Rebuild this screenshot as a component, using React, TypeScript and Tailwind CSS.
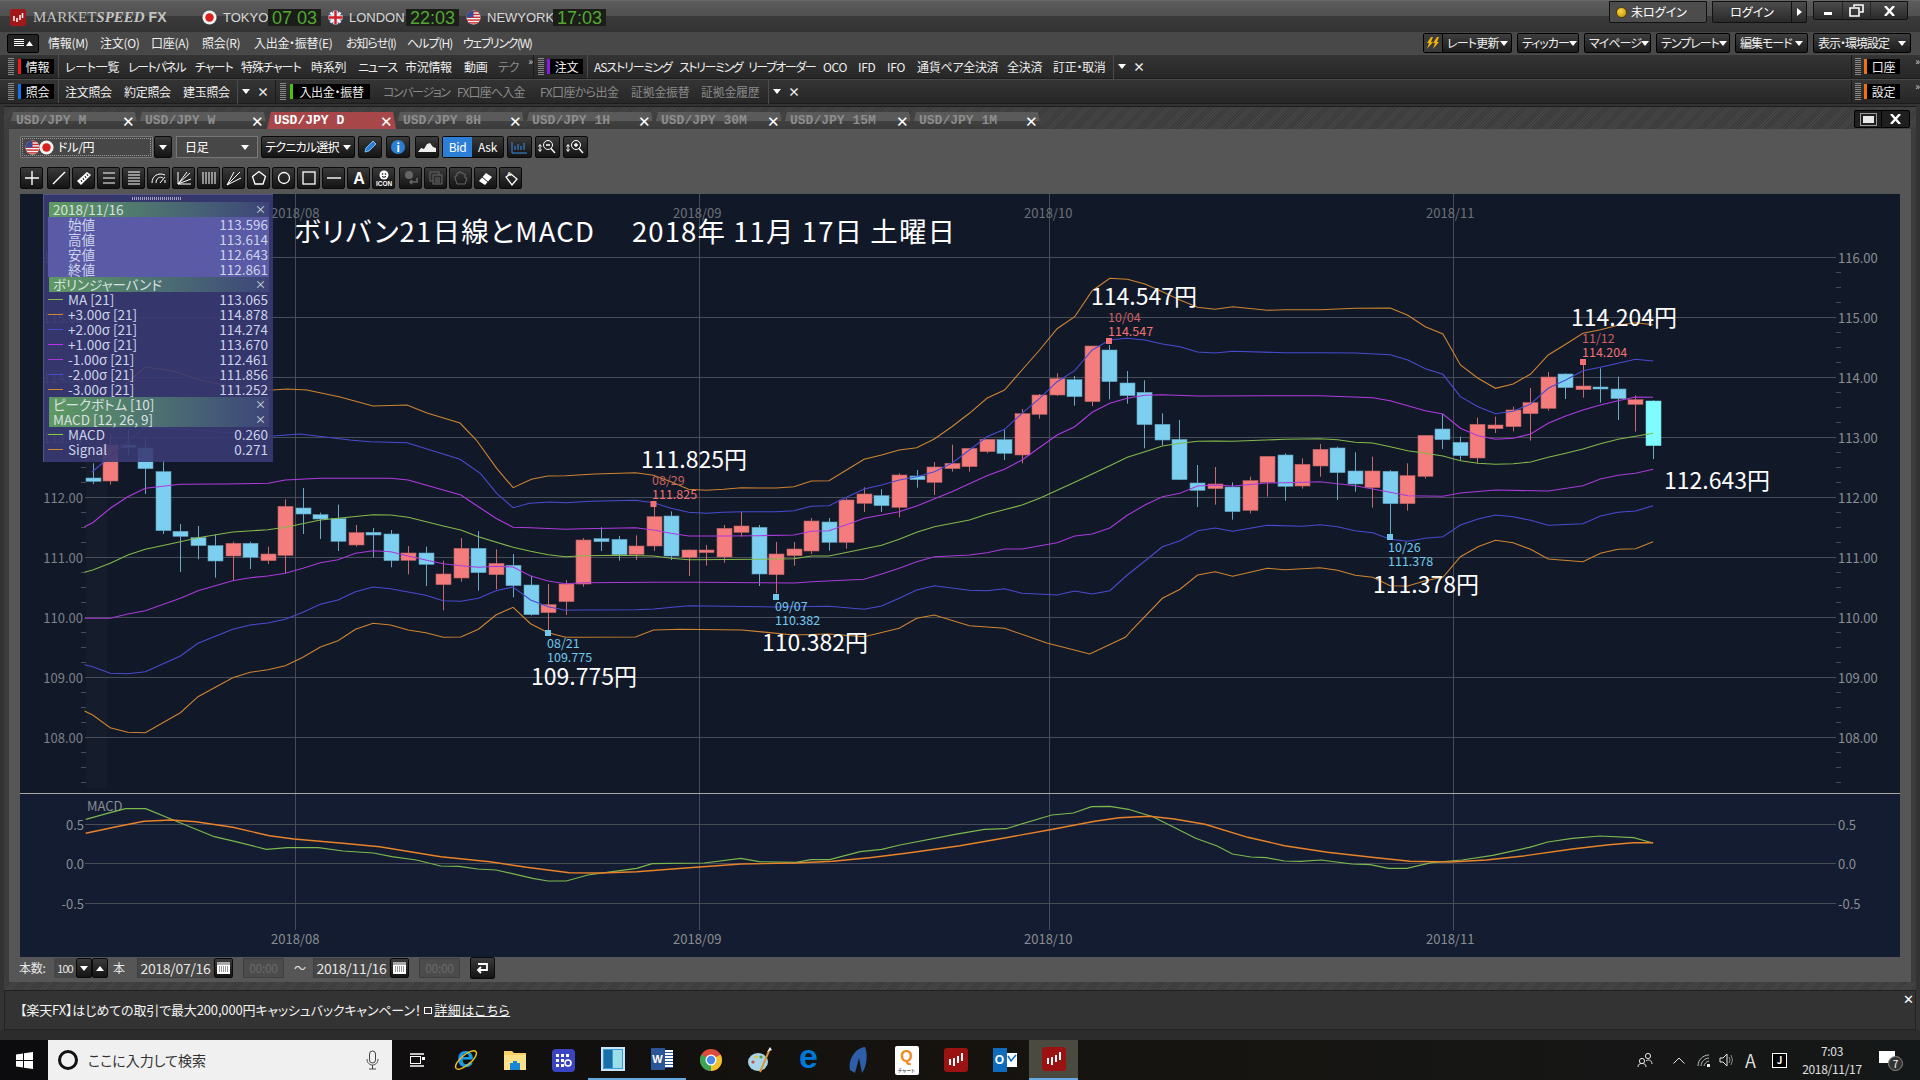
import type { ReactNode } from 'react';

// ---------- chart data (read off the reference, in zoomed crop coordinates) ----------
type Pt = [number, number];
const z8 = (x: number, y: number): Pt => [60 + x / 2.45, 440 + y / 3];
const z9 = (x: number, y: number): Pt => [640 + x / 2.45, 250 + y / 3];
const z10 = (x: number, y: number): Pt => [1240 + x / 2.45, 250 + y / 3];
const z11 = (x: number, y: number): Pt => [x / 1.6333, 780 + y / 3];
const z12 = (x: number, y: number): Pt => [960 + x / 1.6333, 780 + y / 3];

const pairs = (vals: number[], fn: (x: number, y: number) => Pt) => {
  const out: Pt[] = [];
  for (let i = 0; i < vals.length; i += 2) out.push(fn(vals[i], vals[i + 1]));
  return out;
};

const band = (head: number[], a: number[], b: number[], c: number[]) => {
  const pts = [
    ...pairs(head, (x, y) => [x, y]),
    ...pairs(a, z8).filter((p) => p[0] <= 650),
    ...pairs(b, z9).filter((p) => p[0] > 650 && p[0] <= 1250),
    ...pairs(c, z10).filter((p) => p[0] > 1250),
  ];
  return pts.map((p) => `${p[0].toFixed(1)},${p[1].toFixed(1)}`).join(' ');
};

const toLine = (pts: Pt[]) => pts.map((p) => `${p[0].toFixed(1)},${p[1].toFixed(1)}`).join(' ');

const BANDS = [
  {
    color: '#d08430',
    points: band(
      [92, 418, 110, 400, 127, 383, 145, 367, 173, 371, 200, 380, 233, 387, 273, 390, 287, 389, 307, 390, 340, 397, 373, 406, 407, 405, 427, 413, 460, 423],
      [1020, 0, 1070, 85, 1110, 143, 1155, 118, 1195, 108, 1240, 107, 1310, 102, 1410, 98, 1450, 105],
      [33, 676, 76, 695, 119, 718, 162, 721, 205, 718, 248, 713, 291, 714, 334, 714, 377, 710, 420, 693, 463, 692, 506, 660, 549, 628, 592, 615, 635, 600, 678, 593, 721, 567, 764, 530, 807, 490, 850, 445, 893, 420, 936, 360, 979, 300, 1022, 236, 1065, 200, 1108, 122, 1151, 85, 1194, 88, 1237, 102, 1280, 125, 1323, 150, 1366, 172, 1409, 178, 1452, 170, 1495, 178, 1538, 181],
      [24, 179, 67, 181, 110, 179, 196, 179, 282, 175, 368, 174, 411, 196, 454, 230, 497, 252, 540, 345, 583, 385, 626, 415, 669, 402, 712, 372, 755, 315, 798, 283, 840, 250, 883, 239, 926, 226, 969, 218, 1012, 224],
    ),
  },
  {
    color: '#4a4ad0',
    points: band(
      [92, 472, 145, 427, 180, 429, 273, 436, 300, 434],
      [710, 0, 760, 5, 850, 8, 980, 58, 1030, 100, 1070, 160, 1110, 203, 1150, 190, 1200, 186, 1240, 188, 1300, 184, 1410, 181, 1450, 187],
      [33, 758, 76, 775, 119, 787, 162, 790, 205, 787, 248, 785, 291, 785, 334, 785, 377, 782, 420, 769, 463, 767, 506, 742, 549, 717, 592, 705, 635, 690, 678, 680, 721, 665, 764, 640, 807, 600, 850, 560, 893, 538, 936, 490, 979, 445, 1022, 395, 1065, 362, 1108, 300, 1151, 270, 1194, 265, 1237, 270, 1280, 282, 1323, 290, 1366, 306, 1409, 309, 1452, 304, 1495, 309, 1538, 310],
      [24, 310, 110, 308, 196, 308, 282, 309, 368, 314, 411, 330, 454, 356, 497, 373, 540, 440, 583, 470, 626, 491, 669, 484, 712, 462, 755, 415, 798, 390, 840, 362, 883, 352, 926, 340, 969, 328, 1012, 333],
    ),
  },
  {
    color: '#b03ae0',
    points: band(
      [],
      [60, 260, 80, 248, 123, 205, 166, 170, 209, 145, 295, 133, 400, 132, 510, 130, 552, 120, 638, 115, 810, 115, 853, 120, 896, 135, 982, 165, 1025, 200, 1068, 235, 1110, 262, 1153, 263, 1239, 268, 1282, 266, 1410, 263, 1454, 268],
      [33, 840, 76, 850, 119, 858, 205, 858, 291, 857, 377, 855, 420, 844, 463, 842, 506, 824, 549, 805, 635, 785, 678, 768, 764, 725, 850, 677, 893, 658, 936, 630, 1022, 555, 1065, 530, 1108, 487, 1151, 460, 1194, 445, 1237, 436, 1280, 434, 1366, 438, 1538, 438],
      [24, 438, 196, 437, 325, 443, 368, 452, 411, 467, 454, 482, 497, 492, 540, 535, 583, 557, 626, 568, 669, 565, 712, 552, 755, 520, 798, 498, 840, 480, 883, 465, 926, 452, 969, 441, 1012, 442],
    ),
  },
  {
    color: '#86b84a',
    points: band(
      [],
      [60, 397, 80, 390, 123, 370, 166, 345, 209, 328, 295, 305, 338, 293, 423, 276, 509, 269, 552, 262, 638, 240, 767, 224, 810, 225, 853, 232, 939, 258, 982, 270, 1025, 290, 1110, 322, 1153, 334, 1196, 344, 1239, 350, 1282, 347, 1368, 346, 1454, 347],
      [33, 918, 76, 925, 119, 929, 291, 928, 377, 926, 420, 918, 463, 918, 592, 886, 635, 868, 678, 847, 721, 830, 807, 810, 850, 793, 936, 765, 979, 745, 1065, 697, 1108, 672, 1151, 647, 1194, 622, 1237, 605, 1280, 588, 1323, 580, 1366, 574, 1409, 573, 1452, 574, 1495, 570, 1568, 568],
      [0, 573, 110, 568, 196, 566, 239, 569, 282, 577, 325, 579, 368, 590, 411, 602, 454, 610, 497, 618, 540, 632, 583, 640, 626, 643, 669, 641, 712, 636, 755, 622, 798, 610, 840, 597, 883, 581, 926, 568, 969, 559, 1012, 550],
    ),
  },
  {
    color: '#a83ad8',
    points: band(
      [],
      [60, 535, 123, 535, 166, 522, 209, 512, 295, 475, 338, 452, 423, 422, 466, 413, 509, 408, 552, 400, 595, 385, 638, 368, 681, 359, 724, 340, 767, 332, 810, 335, 853, 348, 896, 360, 939, 371, 982, 377, 1025, 382, 1068, 379, 1110, 381, 1153, 408, 1196, 423, 1239, 431, 1282, 428, 1450, 428],
      [33, 997, 147, 997, 377, 999, 420, 995, 549, 988, 592, 972, 635, 955, 678, 935, 721, 920, 807, 915, 850, 908, 893, 897, 936, 897, 1022, 878, 1065, 858, 1108, 852, 1151, 834, 1194, 796, 1237, 765, 1280, 740, 1323, 730, 1366, 708, 1409, 705, 1452, 708, 1495, 700, 1538, 697],
      [24, 703, 67, 699, 110, 698, 196, 695, 282, 707, 368, 727, 411, 737, 497, 739, 540, 729, 626, 720, 755, 723, 840, 707, 883, 687, 926, 676, 969, 670, 1012, 658],
    ),
  },
  {
    color: '#4a4ad0',
    points: band(
      [],
      [60, 674, 80, 680, 123, 700, 166, 701, 209, 695, 295, 648, 338, 610, 423, 568, 466, 555, 509, 549, 552, 538, 595, 517, 638, 493, 681, 480, 724, 455, 767, 441, 810, 446, 896, 466, 939, 482, 982, 484, 1025, 475, 1068, 452, 1110, 441, 1153, 480, 1196, 500, 1239, 511, 1282, 510, 1411, 509, 1450, 505],
      [33, 1077, 119, 1067, 334, 1071, 463, 1069, 549, 1078, 592, 1068, 635, 1045, 678, 1020, 721, 1007, 807, 1021, 850, 1022, 893, 1016, 936, 1030, 1022, 1035, 1065, 1023, 1108, 1032, 1151, 1022, 1194, 975, 1237, 933, 1280, 890, 1323, 872, 1366, 842, 1409, 834, 1452, 844, 1495, 832, 1538, 827],
      [24, 839, 67, 826, 153, 829, 196, 824, 239, 830, 282, 842, 325, 848, 368, 868, 411, 874, 454, 865, 497, 860, 540, 825, 583, 807, 626, 795, 669, 800, 712, 811, 755, 826, 840, 821, 883, 798, 926, 787, 969, 783, 1012, 767],
    ),
  },
  {
    color: '#d08430',
    points: band(
      [],
      [60, 813, 80, 825, 123, 863, 166, 877, 209, 878, 295, 818, 338, 770, 423, 713, 466, 697, 509, 689, 552, 677, 595, 652, 638, 621, 681, 602, 724, 568, 767, 550, 810, 555, 853, 570, 896, 578, 939, 592, 982, 591, 1025, 568, 1068, 525, 1110, 502, 1153, 551, 1196, 578, 1239, 592, 1410, 591, 1450, 585],
      [33, 1140, 100, 1138, 250, 1140, 377, 1155, 463, 1152, 549, 1160, 635, 1135, 678, 1105, 721, 1095, 807, 1127, 893, 1135, 997, 1179, 1102, 1212, 1190, 1161, 1205, 1140, 1280, 1045, 1323, 1018, 1366, 975, 1409, 965, 1452, 979, 1495, 962, 1538, 955],
      [0, 971, 24, 962, 67, 955, 110, 959, 196, 953, 239, 961, 282, 976, 325, 982, 368, 1007, 411, 1008, 454, 992, 497, 982, 540, 920, 583, 890, 626, 871, 669, 878, 712, 898, 755, 927, 840, 935, 883, 910, 926, 898, 969, 896, 1012, 875],
    ),
  },
];

const MACD_LINE = toLine([
  ...pairs([140, 118, 180, 98, 205, 86, 238, 86, 290, 125, 350, 170, 385, 185, 435, 208, 470, 203, 520, 203, 560, 213, 610, 219, 640, 230, 680, 240, 720, 258, 750, 259, 780, 267, 810, 270, 870, 295, 895, 303, 925, 303, 960, 285, 1000, 275, 1040, 265, 1065, 251, 1150, 249, 1210, 235, 1240, 245, 1300, 247, 1325, 239, 1355, 239, 1405, 215, 1440, 208, 1470, 195, 1560, 163], z11),
  ...pairs([40, 148, 75, 146, 150, 105, 185, 99, 215, 80, 245, 79, 275, 88, 315, 110, 385, 175, 420, 198, 445, 222, 475, 231, 500, 233, 530, 243, 555, 244, 590, 240, 640, 252, 670, 254, 700, 265, 730, 265, 770, 248, 820, 240, 870, 226, 930, 202, 960, 186, 1000, 175, 1045, 168, 1100, 173, 1132, 189], z12),
]);
const SIGNAL_LINE = toLine([
  ...pairs([140, 160, 190, 140, 235, 124, 280, 120, 320, 125, 380, 142, 440, 167, 480, 177, 560, 190, 620, 200, 720, 230, 800, 245, 860, 262, 930, 278, 980, 279, 1040, 275, 1120, 264, 1210, 252, 1300, 249, 1360, 244, 1420, 233, 1480, 220, 1568, 197], z11),
  ...pairs([75, 173, 145, 150, 220, 124, 260, 113, 310, 109, 350, 117, 400, 133, 470, 172, 530, 197, 600, 217, 680, 233, 735, 244, 800, 246, 860, 240, 920, 228, 1000, 207, 1060, 194, 1100, 188, 1132, 188], z12),
]);

// kind, body top, body bottom, wick top, wick bottom
type Row = [string, number, number, number, number];
const C8: Row[] = [
  ['b', 114, 124, 70, 132], ['r', 15, 123, -20, 134], ['b', 15, 22, -30, 45], ['b', 24, 86, -9, 162], ['b', 95, 272, 60, 282],
  ['b', 274, 289, 252, 396], ['b', 293, 317, 258, 358], ['b', 317, 363, 283, 413], ['r', 310, 348, 305, 422], ['b', 310, 352, 305, 387],
  ['r', 342, 362, 320, 372], ['r', 199, 346, 178, 400], ['b', 204, 222, 144, 282], ['b', 224, 237, 218, 297], ['b', 236, 304, 194, 333],
  ['r', 278, 315, 255, 320], ['b', 277, 285, 264, 352], ['b', 282, 362, 270, 382], ['r', 339, 361, 318, 403], ['b', 339, 373, 320, 438],
  ['r', 402, 434, 362, 511], ['r', 325, 414, 294, 425], ['b', 325, 398, 273, 452], ['r', 370, 404, 328, 448], ['b', 376, 437, 342, 472],
  ['b', 435, 524, 407, 527], ['r', 494, 518, 432, 575], ['r', 432, 485, 420, 525], ['r', 300, 432, 294, 440], ['b', 296, 305, 262, 333],
  ['b', 298, 344, 288, 362], ['r', 318, 343, 286, 360], ['r', 230, 318, 200, 333], ['b', 228, 348, 214, 360], ['r', 330, 352, 328, 408],
];
const C9: Row[] = [
  ['r', 900, 908, 885, 947], ['r', 835, 921, 825, 938], ['r', 828, 847, 786, 860], ['b', 832, 972, 825, 1008], ['r', 912, 974, 876, 1030],
  ['r', 897, 917, 876, 947], ['r', 813, 903, 804, 912], ['b', 816, 877, 804, 902], ['r', 750, 877, 745, 896], ['r', 732, 760, 712, 786],
  ['b', 737, 767, 718, 786], ['r', 675, 772, 670, 802], ['b', 678, 689, 660, 713], ['r', 651, 697, 636, 735], ['r', 640, 656, 584, 665],
  ['r', 595, 650, 595, 665], ['r', 568, 605, 567, 610], ['b', 569, 610, 540, 630], ['r', 491, 615, 477, 640], ['r', 435, 493, 432, 506],
  ['r', 386, 435, 370, 438], ['b', 389, 440, 378, 467], ['r', 288, 455, 288, 468], ['b', 300, 395, 285, 448], ['b', 399, 437, 363, 461],
  ['b', 427, 524, 391, 595], ['b', 523, 570, 490, 586], ['b', 568, 689, 510, 690], ['b', 699, 721, 645, 771], ['r', 702, 716, 651, 764],
  ['b', 711, 785, 697, 809],
];
const C10: Row[] = [
  ['r', 692, 781, 680, 790], ['r', 619, 697, 619, 740], ['b', 615, 709, 610, 752], ['r', 643, 708, 625, 716], ['r', 598, 648, 582, 680],
  ['b', 594, 668, 590, 750], ['b', 663, 702, 607, 725], ['r', 663, 713, 620, 773], ['b', 664, 761, 660, 855], ['r', 677, 761, 640, 782],
  ['r', 556, 679, 555, 686], ['b', 537, 569, 492, 597], ['b', 577, 617, 560, 632], ['r', 523, 624, 503, 640], ['r', 525, 536, 500, 549],
  ['r', 480, 530, 470, 544], ['r', 458, 491, 414, 572], ['r', 381, 475, 366, 482], ['b', 372, 413, 370, 447], ['r', 408, 419, 345, 443],
  ['b', 411, 415, 355, 458], ['b', 417, 446, 380, 510], ['r', 449, 463, 436, 545], ['c', 453, 587, 451, 627],
];
const CANDLES = [
  ...C8.map((r) => ({ k: r[0], bt: 440 + r[1] / 3, bb: 440 + r[2] / 3, wt: 440 + r[3] / 3, wb: 440 + r[4] / 3 })),
  ...[...C9, ...C10].map((r) => ({ k: r[0], bt: 250 + r[1] / 3, bb: 250 + r[2] / 3, wt: 250 + r[3] / 3, wb: 250 + r[4] / 3 })),
];
const CANDLE_COLOR: Record<string, { fill: string; edge: string; wick: string }> = {
  r: { fill: '#f47c7c', edge: '#b86060', wick: '#c46a6a' },
  b: { fill: '#7ccfef', edge: '#5f9fbc', wick: '#6aa8c4' },
  c: { fill: '#7ffcff', edge: '#70d8dc', wick: '#66b0c0' },
};

const PRICE_GRID = [116, 115, 114, 113, 112, 111, 110, 109, 108];
const MONTHS = [
  { label: '2018/08', x: 295.5, tx: 271 },
  { label: '2018/09', x: 699.5, tx: 673 },
  { label: '2018/10', x: 1049.5, tx: 1024 },
  { label: '2018/11', x: 1453.5, tx: 1426 },
];
const MARKERS = [
  { x: 548, y: 633, c: 'b', d: '08/21', p: '109.775', tx: 547, ty: 648 },
  { x: 653.5, y: 504, c: 'r', d: '08/29', p: '111.825', tx: 652, ty: 485 },
  { x: 776, y: 597, c: 'b', d: '09/07', p: '110.382', tx: 775, ty: 611 },
  { x: 1109, y: 341, c: 'r', d: '10/04', p: '114.547', tx: 1108, ty: 322 },
  { x: 1390, y: 537, c: 'b', d: '10/26', p: '111.378', tx: 1388, ty: 552 },
  { x: 1583, y: 362, c: 'r', d: '11/12', p: '114.204', tx: 1582, ty: 343 },
];
const BIG_LABELS = [
  { t: '111.825円', x: 641, y: 468 },
  { t: '110.382円', x: 762, y: 651 },
  { t: '109.775円', x: 531, y: 685 },
  { t: '114.547円', x: 1091, y: 305 },
  { t: '114.204円', x: 1571, y: 326 },
  { t: '112.643円', x: 1664, y: 489 },
  { t: '111.378円', x: 1373, y: 593 },
];

function ChartSvg() {
  return (
    <svg viewBox="20 194 1880 763" width="1880" height="763" className="block">
      <rect x="20" y="194" width="1880" height="599" fill="#111929" />
      <rect x="20" y="793" width="1880" height="164" fill="#131c30" />
      <rect x="86" y="194" width="21" height="594" fill="#151c2b" />

      {/* grid */}
      {PRICE_GRID.map((p) => {
        const y = 257 + (116 - p) * 60 + 0.5;
        return (
          <g key={p}>
            <line x1="85" x2="1836" y1={y} y2={y} stroke="#474c58" />
            <text x="83" y={y + 5} textAnchor="end" fontSize="13" fill="#7d8088">{p}.00</text>
            <text x="1838" y={y + 5} fontSize="13" fill="#8a8d92">{p}.00</text>
            {[15, 30, 45].map((d) => (
              <g key={d}>
                <line x1="81" x2="86" y1={y + d} y2={y + d} stroke="#474c58" />
                <line x1="1836" x2="1841" y1={y + d} y2={y + d} stroke="#474c58" />
              </g>
            ))}
          </g>
        );
      })}
      {MONTHS.map((m) => (
        <g key={m.label}>
          <line x1={m.x} x2={m.x} y1="194" y2="930" stroke="#474c58" />
          <text x={m.tx} y="218" fontSize="13" fill="#6c7078">{m.label}</text>
          <text x={m.tx} y="944" fontSize="13" fill="#8a8d92">{m.label}</text>
        </g>
      ))}

      {/* candles */}
      {CANDLES.map((c, i) => {
        const x = Math.round(92.6 + 17.53 * i) + 0.5;
        const col = CANDLE_COLOR[c.k];
        return (
          <g key={i}>
            <line x1={x} x2={x} y1={c.wt} y2={c.wb} stroke={col.wick} />
            <rect x={x - 7.5} y={c.bt} width="15" height={Math.max(c.bb - c.bt, 2)} fill={col.fill} stroke={col.edge} strokeWidth="0.6" />
          </g>
        );
      })}

      {/* bollinger bands */}
      {BANDS.map((b, i) => (
        <polyline key={i} points={b.points} fill="none" stroke={b.color} strokeWidth="1.1" />
      ))}

      {/* peak / bottom labels */}
      {MARKERS.map((m) => {
        const col = m.c === 'r' ? '#f07272' : '#72c8ec';
        return (
          <g key={m.d}>
            <rect x={m.x - 3} y={m.y - 3} width="6" height="6" fill={col} />
            <text x={m.tx} y={m.ty} fontSize="12.5" fill={m.c === 'r' ? '#c86060' : col}>{m.d}</text>
            <text x={m.tx} y={m.ty + 14} fontSize="12.5" fill={col}>{m.p}</text>
          </g>
        );
      })}
      {BIG_LABELS.map((l) => (
        <text key={l.t} x={l.x} y={l.y} fontSize="23" fill="#ffffff">{l.t}</text>
      ))}
      <text x="294" y="242" fontSize="27.5" fill="#ffffff" textLength="300" lengthAdjust="spacing">ボリバン21日線とMACD</text>
      <text x="632" y="242" fontSize="27.5" fill="#ffffff" textLength="323" lengthAdjust="spacing">2018年 11月 17日 土曜日</text>

      {/* MACD pane */}
      <line x1="20" x2="1900" y1="793.5" y2="793.5" stroke="#a8a8a8" />
      {[
        { y: 824.5, t: '0.5' },
        { y: 863.5, t: '0.0' },
        { y: 903.5, t: '-0.5' },
      ].map((g) => (
        <g key={g.t}>
          <line x1="85" x2="1836" y1={g.y} y2={g.y} stroke="#474c58" />
          <text x="84" y={g.y + 5} textAnchor="end" fontSize="13" fill="#8a8d92">{g.t}</text>
          <text x="1838" y={g.y + 5} fontSize="13" fill="#8a8d92">{g.t}</text>
        </g>
      ))}
      <text x="87" y="811" fontSize="13" fill="#8a8d92">MACD</text>
      <polyline points={MACD_LINE} fill="none" stroke="#7cb84e" strokeWidth="1.2" />
      <polyline points={SIGNAL_LINE} fill="none" stroke="#e8832a" strokeWidth="1.4" />
    </svg>
  );
}

// ---------- floating data panel ----------
const INDICATORS = [
  { c: '#86b84a', l: 'MA [21]', v: '113.065' },
  { c: '#d08430', l: '+3.00σ [21]', v: '114.878' },
  { c: '#4a4ad0', l: '+2.00σ [21]', v: '114.274' },
  { c: '#c030f0', l: '+1.00σ [21]', v: '113.670' },
  { c: '#a83ad8', l: '-1.00σ [21]', v: '112.461' },
  { c: '#4a4ad0', l: '-2.00σ [21]', v: '111.856' },
  { c: '#d08430', l: '-3.00σ [21]', v: '111.252' },
];
const OHLC = [
  ['始値', '113.596'],
  ['高値', '113.614'],
  ['安値', '112.643'],
  ['終値', '112.861'],
];

function PanelHead({ children }: { children: ReactNode }) {
  return (
    <div className="flex h-[15px] items-center justify-between ml-[1px] mr-[4px] pl-[4px] pr-[3px] bg-gradient-to-r from-[#5f9a60] to-[#3d4478] text-[13.5px] text-[#d8e2e0] whitespace-nowrap">
      <span>{children}</span>
      <span className="text-[11px] leading-none">×</span>
    </div>
  );
}

function PanelRow({ swatch, label, value }: { swatch?: string; label: string; value: string }) {
  return (
    <div className="flex h-[15px] items-center text-[13.5px] text-[#ccd4ec] whitespace-nowrap">
      <span className="w-[15px] h-[1px]" style={{ backgroundColor: swatch }} />
      <span className="ml-[5px]">{label}</span>
      <span className="ml-auto mr-[1px]">{value}</span>
    </div>
  );
}

function DataPanel() {
  return (
    <div className="absolute left-[23px] top-0 w-[230px] h-[268px] bg-[#3a3a72]/90 border-l border-t border-[#55557f] pl-[4px] flex flex-col">
      <div className="h-[7px] flex items-center justify-center pr-[8px]">
        <div className="h-[3px] w-[50px] bg-[repeating-linear-gradient(90deg,#a0a0c0_0px,#a0a0c0_1px,transparent_1px,transparent_2px)]" />
      </div>
      <PanelHead>2018/11/16</PanelHead>
      <div className="bg-[#5a5aa6] mr-[4px]">
        {OHLC.map((r) => (
          <PanelRow key={r[0]} label={r[0]} value={r[1]} />
        ))}
      </div>
      <PanelHead>ボリンジャーバンド</PanelHead>
      <div className="pr-[4px]">
        {INDICATORS.map((r) => (
          <PanelRow key={r.l} swatch={r.c} label={r.l} value={r.v} />
        ))}
      </div>
      <PanelHead>ピークボトム [10]</PanelHead>
      <PanelHead>MACD [12, 26, 9]</PanelHead>
      <div className="pr-[4px]">
        <PanelRow swatch="#86d030" label="MACD" value="0.260" />
        <PanelRow swatch="#d08430" label="Signal" value="0.271" />
      </div>
    </div>
  );
}

// ---------- chrome ----------
const Flag = ({ kind }: { kind: 'jp' | 'uk' | 'us' }) => (
  <svg width="15" height="15" viewBox="0 0 16 16" className="shrink-0">
    <defs>
      <clipPath id={`c-${kind}`}><circle cx="8" cy="8" r="7.5" /></clipPath>
    </defs>
    <g clipPath={`url(#c-${kind})`}>
      <rect width="16" height="16" fill="#f2f2f2" />
      {kind === 'jp' && <circle cx="8" cy="8" r="4.5" fill="#d8201c" />}
      {kind === 'uk' && (
        <>
          <rect width="16" height="16" fill="#2b3f8a" />
          <path d="M0 0L16 16M16 0L0 16" stroke="#eee" strokeWidth="3" />
          <path d="M8 0V16M0 8H16" stroke="#eee" strokeWidth="5" />
          <path d="M8 0V16M0 8H16" stroke="#d0202c" strokeWidth="2.6" />
        </>
      )}
      {kind === 'us' && (
        <>
          {[1, 4, 7, 10, 13].map((y) => (
            <rect key={y} y={y} width="16" height="1.5" fill="#cf2a2a" />
          ))}
          <rect width="8" height="8" fill="#3a4a90" />
        </>
      )}
    </g>
  </svg>
);

function Clock({ time }: { time: string }) {
  return (
    <span className="flex h-[17px] w-[53px] items-center justify-center bg-[#1a1d18] font-['Liberation_Sans',sans-serif] text-[18px] leading-none text-[#54a832] whitespace-pre">
      {time}
    </span>
  );
}

const CaretDown = ({ className = 'text-white' }: { className?: string }) => (
  <svg width="8" height="5" viewBox="0 0 8 5" className={`${className} shrink-0`}>
    <path d="M0 0H8L4 5Z" fill="currentColor" />
  </svg>
);

function TitleBar() {
  return (
    <div className="relative flex h-[32px] shrink-0 border-t border-[#666] bg-[linear-gradient(#5c5c5c_0,#505050_15px,#3b3b3b_15px,#333333_100%)]">
      <div className="mt-[8px] ml-[10px] flex h-[17px] w-[16px] items-center justify-center rounded-[2px] bg-[#a01818]">
        <svg width="12" height="11" viewBox="0 0 12 11">
          <path d="M2 4V9M5 6V10M8 3V8M10.5 1V6" stroke="#fff" strokeWidth="1.5" />
        </svg>
      </div>
      <div className="mt-[6px] ml-[7px] w-[140px] text-[15px] leading-[20px] text-[#c4c4c4] font-['Liberation_Serif',serif] whitespace-nowrap">
        MARKET<span className="font-bold italic">SPEED</span>
        <span className="font-['Liberation_Sans',sans-serif] font-bold text-[14px]"> FX</span>
      </div>
      <div className="mt-[8px] ml-[29px] flex h-[17px] items-center text-[13px] text-[#d8d8d8] font-['Liberation_Sans',sans-serif]">
        <Flag kind="jp" />
        <span className="ml-[6px] w-[45px]">TOKYO</span>
        <Clock time="07 03" />
        <span className="ml-[7px]"><Flag kind="uk" /></span>
        <span className="ml-[6px] w-[57px]">LONDON</span>
        <Clock time="22:03" />
        <span className="ml-[7px]"><Flag kind="us" /></span>
        <span className="ml-[6px] w-[66px]">NEWYORK</span>
        <Clock time="17:03" />
      </div>
      <div className="ml-auto mr-[12px] flex items-start">
        <div className="flex h-[22px] w-[98px] items-center rounded-b-[2px] border border-[#111] bg-[#4c4c4c] pl-[6px] text-[12px]">
          <span className="size-[11px] rounded-full bg-[radial-gradient(circle_at_40%_35%,#ffd84a,#c08a00)] border border-[#5a4200]" />
          <span className="ml-[4px]">未ログイン</span>
        </div>
        <div className="ml-[5px] flex h-[22px] w-[95px] items-center rounded-b-[2px] border border-[#111] bg-gradient-to-b from-[#4c4c4c] to-[#2a2a2a] text-[12px]">
          <span className="w-[78px] text-center">ログイン</span>
          <span className="flex h-full flex-1 items-center justify-center border-l border-[#111]">
            <svg width="5" height="8" viewBox="0 0 5 8"><path d="M0 0L5 4L0 8Z" fill="#fff" /></svg>
          </span>
        </div>
        <div className="ml-[6px] flex h-[19px] rounded-b-[2px] border border-[#111] bg-gradient-to-b from-[#4c4c4c] to-[#2a2a2a]">
          <span className="flex w-[28px] items-end justify-center pb-[4px]"><span className="h-[3px] w-[8px] bg-white" /></span>
          <span className="flex w-[28px] items-center justify-center border-l border-[#222]">
            <svg width="15" height="13" viewBox="0 0 15 13"><path d="M5 3V1H14V8H11M1 4H10V12H1Z" fill="none" stroke="#fff" strokeWidth="1.6" /></svg>
          </span>
          <span className="flex w-[37px] items-center justify-center border-l border-[#222]">
            <svg width="11" height="10" viewBox="0 0 11 10"><path d="M1 0L10 10M10 0L1 10" stroke="#fff" strokeWidth="2.4" /></svg>
          </span>
        </div>
      </div>
    </div>
  );
}

const MENU = [
  { t: '情報(M)', w: 'w-[52px]' },
  { t: '注文(O)', w: 'w-[51px]' },
  { t: '口座(A)', w: 'w-[51px]' },
  { t: '照会(R)', w: 'w-[52px]' },
  { t: '入出金・振替(E)', w: 'w-[92px]' },
  { t: 'お知らせ(I)', w: 'w-[61px] tracking-[-1px]' },
  { t: 'ヘルプ(H)', w: 'w-[56px] tracking-[-1px]' },
  { t: 'ウェブリンク(W)', w: 'w-[70px] tracking-[-1.4px]' },
];
const RIGHT_MENU = [
  { t: 'ティッカー', w: 'w-[62px]' },
  { t: 'マイページ', w: 'w-[67px]' },
  { t: 'テンプレート', w: 'w-[74px]' },
  { t: '編集モード', w: 'w-[73px]' },
  { t: '表示・環境設定', w: 'w-[98px]' },
];

function MenuBar() {
  return (
    <div className="flex h-[22px] shrink-0 items-center bg-[#484848] text-[12px] tracking-[-0.3px] text-[#eeeeee]">
      <div className="ml-[7px] flex h-[19px] w-[32px] items-center justify-center gap-[2px] rounded-[2px] border border-[#000] bg-[#222]">
        <span className="h-[8px] w-[10px] bg-[repeating-linear-gradient(#fff_0px,#fff_1px,transparent_1px,transparent_2px)]" />
        <svg width="7" height="5" viewBox="0 0 7 5"><path d="M0 5H7L3.5 0Z" fill="#fff" /></svg>
      </div>
      <div className="ml-[9px] flex whitespace-nowrap">
        {MENU.map((m) => (
          <span key={m.t} className={m.w}>{m.t}</span>
        ))}
      </div>
      <div className="ml-auto mr-[9px] flex gap-[5px] whitespace-nowrap">
        <div className="flex h-[20px] w-[89px] items-center rounded-[2px] border border-[#000] bg-gradient-to-b from-[#3e3e3e] to-[#1c1c1c]">
          <span className="flex h-full w-[19px] items-center justify-center border-r border-[#000] bg-[#3a3a3a]">
            <svg width="14" height="12" viewBox="0 0 14 12"><path d="M5 0L1 6H3L1 12L7 5H5L7 0ZM11 0L7 6H9L7 12L13 5H11L13 0Z" fill="#f0b010" /></svg>
          </span>
          <span className="ml-[4px] w-[53px] tracking-[-0.8px]">レート更新</span>
          <CaretDown />
        </div>
        {RIGHT_MENU.map((m) => (
          <div key={m.t} className={`${m.w} flex h-[20px] items-center justify-between rounded-[2px] border border-[#000] bg-gradient-to-b from-[#3e3e3e] to-[#1c1c1c] pl-[4px] pr-[4px]`}>
            <span className="tracking-[-1px]">{m.t}</span>
            <CaretDown />
          </div>
        ))}
      </div>
    </div>
  );
}

const Grip = () => (
  <span className="h-[17px] w-[6px] shrink-0 bg-[repeating-linear-gradient(#888_0px,#888_1px,transparent_1px,transparent_2px)]" />
);

function GroupLabel({ text, bar, w }: { text: string; bar: string; w: string }) {
  return (
    <div className={`${w} flex h-[15px] shrink-0 items-center bg-black`}>
      <span className={`${bar} h-[15px] w-[3px]`} />
      <span className="flex-1 text-center">{text}</span>
    </div>
  );
}

type Tool = { t: string; w: string; dim?: boolean };

function ToolItems({ items }: { items: Tool[] }) {
  return (
    <>
      {items.map((it) => (
        <span key={it.t} className={`${it.w} shrink-0 whitespace-nowrap ${it.dim ? 'text-[#8a8a8a]' : ''}`}>
          {it.t}
        </span>
      ))}
    </>
  );
}

const RowEnd = () => (
  <span className="flex h-[24px] w-[40px] shrink-0 items-center border-l border-[#4c4c4c] pl-[4px]">
    <CaretDown />
    <span className="ml-[7px] text-[12px] font-bold leading-none">×</span>
  </span>
);

const More = () => <span className="absolute right-[1px] top-[1px] text-[10px] leading-none tracking-[-1px] text-[#cccccc]">»</span>;

const ROW1A: Tool[] = [
  { t: 'レート一覧', w: 'w-[63px]' },
  { t: 'レートパネル', w: 'w-[67px] tracking-[-1.4px]' },
  { t: 'チャート', w: 'w-[46px] tracking-[-1px]' },
  { t: '特殊チャート', w: 'w-[70px] tracking-[-1px]' },
  { t: '時系列', w: 'w-[47px]' },
  { t: 'ニュース', w: 'w-[47px] tracking-[-1px]' },
  { t: '市況情報', w: 'w-[59px]' },
  { t: '動画', w: 'w-[34px]' },
  { t: 'テク', w: 'w-[30px]', dim: true },
];
const ROW1B: Tool[] = [
  { t: 'ASストリーミング', w: 'w-[85px] tracking-[-1.1px]' },
  { t: 'ストリーミング', w: 'w-[69px] tracking-[-1.4px]' },
  { t: 'リーブオーダー', w: 'w-[75px] tracking-[-1.4px]' },
  { t: 'OCO', w: 'w-[35px]' },
  { t: 'IFD', w: 'w-[29px]' },
  { t: 'IFO', w: 'w-[30px]' },
  { t: '通貨ペア全決済', w: 'w-[90px]' },
  { t: '全決済', w: 'w-[46px]' },
  { t: '訂正・取消', w: 'w-[60px]' },
];
const ROW2A: Tool[] = [
  { t: '注文照会', w: 'w-[59px]' },
  { t: '約定照会', w: 'w-[59px]' },
  { t: '建玉照会', w: 'w-[54px]' },
];
const ROW2B: Tool[] = [
  { t: 'コンバージョン', w: 'w-[74px] tracking-[-1.4px]', dim: true },
  { t: 'FX口座へ入金', w: 'w-[83px] tracking-[-0.8px]', dim: true },
  { t: 'FX口座から出金', w: 'w-[91px] tracking-[-0.6px]', dim: true },
  { t: '証拠金振替', w: 'w-[70px]', dim: true },
  { t: '証拠金履歴', w: 'w-[67px]', dim: true },
];

function ToolRows() {
  const row = 'flex h-[25px] shrink-0 items-center border-b border-[#1c1c1c] border-t border-t-[#4a4a4a] bg-gradient-to-b from-[#343434] to-[#272727] text-[12px] tracking-[-0.3px] text-[#eeeeee]';
  return (
    <>
      <div className={row}>
        <div className="relative flex h-full w-[534px] shrink-0 items-center border-r border-[#1a1a1a] pl-[8px]">
          <Grip />
          <span className="ml-[4px]"><GroupLabel text="情報" bar="bg-[#ee1c10]" w="w-[36px]" /></span>
          <span className="ml-[4px] h-full border-l border-[#4c4c4c]" />
          <span className="ml-[6px] flex"><ToolItems items={ROW1A} /></span>
          <More />
        </div>
        <div className="flex h-full flex-1 items-center pl-[4px]">
          <Grip />
          <span className="ml-[3px]"><GroupLabel text="注文" bar="bg-[#8a18e8]" w="w-[36px]" /></span>
          <span className="ml-[4px] h-full border-l border-[#4c4c4c]" />
          <span className="ml-[6px] flex"><ToolItems items={ROW1B} /></span>
          <RowEnd />
          <div className="relative ml-auto flex h-full w-[69px] items-center border-l border-[#1a1a1a] pl-[3px]">
            <Grip />
            <span className="ml-[3px]"><GroupLabel text="口座" bar="bg-[#f07010]" w="w-[36px]" /></span>
            <More />
          </div>
        </div>
      </div>
      <div className={row}>
        <div className="flex h-full w-[276px] shrink-0 items-center border-r border-[#1a1a1a] pl-[8px]">
          <Grip />
          <span className="ml-[4px]"><GroupLabel text="照会" bar="bg-[#1070e8]" w="w-[36px]" /></span>
          <span className="ml-[4px] h-full border-l border-[#4c4c4c]" />
          <span className="ml-[6px] flex"><ToolItems items={ROW2A} /></span>
          <RowEnd />
        </div>
        <div className="flex h-full flex-1 items-center pl-[4px]">
          <Grip />
          <span className="ml-[4px]"><GroupLabel text="入出金・振替" bar="bg-[#4cc010]" w="w-[80px]" /></span>
          <span className="ml-[13px] flex"><ToolItems items={ROW2B} /></span>
          <RowEnd />
          <div className="relative ml-auto flex h-full w-[69px] items-center border-l border-[#1a1a1a] pl-[3px]">
            <Grip />
            <span className="ml-[3px]"><GroupLabel text="設定" bar="bg-[#f07010]" w="w-[36px]" /></span>
            <More />
          </div>
        </div>
      </div>
    </>
  );
}

const TABS = ['USD/JPY M', 'USD/JPY W', 'USD/JPY D', 'USD/JPY 8H', 'USD/JPY 1H', 'USD/JPY 30M', 'USD/JPY 15M', 'USD/JPY 1M'];

function TabStrip() {
  return (
    <div className="flex h-[22px] shrink-0 items-end bg-[repeating-linear-gradient(135deg,#3a3a3a_0px,#3a3a3a_1px,#464646_1px,#464646_2px)] pl-[5px]">
      {TABS.map((t) => {
        const active = t === 'USD/JPY D';
        return (
          <div
            key={t}
            className={`flex h-[17px] w-[129px] shrink-0 items-center pl-[7px] pt-[1px] [clip-path:polygon(4px_0,calc(100%_-_3px)_0,100%_100%,0_100%)] font-['Liberation_Mono',monospace] text-[13px] font-bold ${
              active ? 'bg-[#a8474a] text-white' : 'bg-[linear-gradient(#5a5a5a_0,#5a5a5a_9px,#414141_9px,#3a3a3a_100%)] text-[#8e8e8e]'
            }`}
          >
            <span>{t}</span>
            <span className="ml-auto mr-[3px] text-[15px] leading-none font-normal text-white font-['Liberation_Sans',sans-serif]">✕</span>
          </div>
        );
      })}
      <div className="ml-auto mb-[1px] mr-[6px] flex h-[18px] rounded-[2px] border border-[#000] bg-[#1f1f1f]">
        <span className="flex w-[27px] items-center justify-center border-r border-[#000]">
          <span className="h-[7px] w-[11px] bg-[#e8e8e8] outline outline-1 outline-offset-[2px] outline-[#999]" />
        </span>
        <span className="flex w-[27px] items-center justify-center">
          <svg width="11" height="10" viewBox="0 0 11 10"><path d="M1 0L10 10M10 0L1 10" stroke="#fff" strokeWidth="2.4" /></svg>
        </span>
      </div>
    </div>
  );
}

const btn = 'flex shrink-0 items-center justify-center rounded-[2px] border border-[#0a0a0a] bg-gradient-to-b from-[#3a3a3a] to-[#141414]';

function ChartControls() {
  return (
    <div className="flex h-[29px] items-start pt-[7px] text-[12px] tracking-[-0.3px]">
      <div className="flex h-[22px] w-[133px] items-center rounded-[1px] border border-[#777] bg-[#474747] pl-[4px] outline-1 outline-dotted outline-offset-[-3px] outline-[#999]">
        <Flag kind="us" />
        <span className="-ml-[1px]"><Flag kind="jp" /></span>
        <span className="ml-[4px]">ドル/円</span>
      </div>
      <span className={`${btn} ml-[1px] h-[22px] w-[18px]`}><CaretDown /></span>
      <div className="ml-[4px] flex h-[22px] w-[82px] items-center justify-between border border-[#777] bg-[#474747] px-[8px]">
        <span>日足</span>
        <CaretDown />
      </div>
      <div className={`${btn} ml-[3px] h-[22px] w-[94px] gap-[4px]`}>
        <span className="tracking-[-0.8px]">テクニカル選択</span>
        <CaretDown />
      </div>
      <span className={`${btn} ml-[3px] h-[22px] w-[24px]`}>
        <svg width="14" height="14" viewBox="0 0 14 14"><path d="M2 12L3 8L10 1L13 4L6 11Z" fill="#2a7fd4" stroke="#7ab8ee" /></svg>
      </span>
      <span className={`${btn} ml-[4px] h-[22px] w-[24px]`}>
        <span className="flex size-[14px] items-center justify-center rounded-full bg-[#2a7fd4] text-[11px] font-bold leading-none text-white">i</span>
      </span>
      <span className={`${btn} ml-[5px] h-[22px] w-[24px]`}>
        <svg width="18" height="10" viewBox="0 0 18 10"><path d="M0 10L3 6L6 7L9 2L12 1L15 5L18 6V10Z" fill="#eee" /></svg>
      </span>
      <div className="ml-[3px] flex h-[22px] w-[62px] rounded-[2px] border border-[#0a0a0a]">
        <span className="flex w-[29px] items-center justify-center bg-[#2c7fd6] text-white">Bid</span>
        <span className="flex flex-1 items-center justify-center bg-gradient-to-b from-[#3a3a3a] to-[#141414]">Ask</span>
      </div>
      <span className={`${btn} ml-[3px] h-[22px] w-[25px]`}>
        <svg width="17" height="13" viewBox="0 0 17 13"><path d="M1 1V12H16M4 9V5M7 9V3M10 9V5M13 9V2" stroke="#3a90e8" fill="none" /></svg>
      </span>
      <span className={`${btn} ml-[3px] h-[22px] w-[25px]`}>
        <svg width="19" height="16" viewBox="0 0 19 16"><path d="M2 6V12M0.5 7.5L2 5.5L3.5 7.5M0.5 10.5L2 12.5L3.5 10.5" stroke="#fff" fill="none" /><circle cx="10" cy="6" r="4.5" stroke="#fff" fill="none" /><path d="M13 9.5L17 14M8 6H12" stroke="#fff" strokeWidth="1.4" /></svg>
      </span>
      <span className={`${btn} ml-[3px] h-[22px] w-[25px]`}>
        <svg width="19" height="16" viewBox="0 0 19 16"><path d="M2 6V12M0.5 7.5L2 5.5L3.5 7.5M0.5 10.5L2 12.5L3.5 10.5" stroke="#fff" fill="none" /><circle cx="10" cy="6" r="4.5" stroke="#fff" fill="none" /><path d="M13 9.5L17 14M8 6H12M10 4V8" stroke="#fff" strokeWidth="1.4" /></svg>
      </span>
    </div>
  );
}

// drawing tool glyphs
const DRAW_ICONS: ReactNode[] = [
  <path key="a" d="M9 2V16M2 9H16" stroke="#fff" strokeWidth="1.4" />,
  <path key="b" d="M3 15L15 3" stroke="#fff" strokeWidth="1.4" />,
  <g key="c"><path d="M2 12L12 3L16 6L6 16Z" fill="#fff" /><path d="M6 11L7 13M8 9L9 11M10 7L11 9M12 5L13 7" stroke="#111" /></g>,
  <path key="d" d="M3 4H15M3 9H15M3 14H15" stroke="#fff" />,
  <path key="e" d="M3 3H15M3 6H15M3 9H15M3 12H15M3 15H15" stroke="#fff" />,
  <path key="f" d="M2 14C2 7 8 3 15 6M6 14C6 9 10 7 13 9M10 14L15 8M15 14V11" stroke="#fff" fill="none" />,
  <path key="g" d="M3 3V15H16M3 15L15 4M3 15L12 3M3 15L16 10" stroke="#fff" fill="none" />,
  <path key="h" d="M3 3V15M6 3V15M9 3V15M12 3V15M15 3V15" stroke="#fff" />,
  <path key="i" d="M2 16L15 3M2 16L9 3M2 16L16 9" stroke="#fff" fill="none" />,
  <path key="j" d="M9 2.5L15.5 7.5L13 15H5L2.5 7.5Z" stroke="#fff" strokeWidth="1.3" fill="none" />,
  <circle key="k" cx="9" cy="9" r="5.5" stroke="#fff" strokeWidth="1.3" fill="none" />,
  <rect key="l" x="3" y="3" width="12" height="12" stroke="#fff" strokeWidth="1.3" fill="none" />,
  <path key="m" d="M2 9H16" stroke="#fff" strokeWidth="1.4" />,
  <text key="n" x="9" y="15" textAnchor="middle" fontSize="16" fontWeight="700" fill="#fff">A</text>,
  <g key="o"><circle cx="9" cy="6" r="4.5" fill="#fff" /><circle cx="7.5" cy="5" r="0.8" fill="#000" /><circle cx="10.5" cy="5" r="0.8" fill="#000" /><path d="M7 7.5Q9 9 11 7.5" stroke="#000" fill="none" /><text x="9" y="17" textAnchor="middle" fontSize="6.5" fontWeight="700" fill="#fff">ICON</text></g>,
];
const DIM_ICONS: ReactNode[] = [
  <g key="a"><circle cx="7" cy="6" r="4" fill="#666" /><path d="M15 9V13H8M10 11L8 13L10 15" stroke="#666" fill="none" strokeWidth="1.5" /></g>,
  <g key="b"><rect x="3" y="3" width="9" height="9" fill="none" stroke="#666" /><rect x="6" y="6" width="9" height="9" fill="#2a2a2a" stroke="#666" /><path d="M8 9H13M8 11H13M8 13H13" stroke="#666" /></g>,
  <path key="c" d="M5 15L3 9V7H5V4H7V3H9V4H11V5H13V9H15L13 15Z" fill="none" stroke="#666" />,
];
const LAST_ICONS: ReactNode[] = [
  <g key="a"><path d="M2 12L9 4L15 8L8 16Z" fill="#fff" /><path d="M5 8L11 13" stroke="#222" /></g>,
  <g key="b"><path d="M4 8L9 5L15 10L10 16Z" fill="none" stroke="#fff" strokeWidth="1.3" /><text x="5" y="7" fontSize="6" fontWeight="700" fill="#fff">A</text></g>,
];

const DrawBtn = ({ children }: { children: ReactNode }) => (
  <span className={`${btn} h-[22px] w-[23px] font-['Liberation_Sans',sans-serif]`}>
    <svg width="18" height="18" viewBox="0 0 18 18">{children}</svg>
  </span>
);

function DrawingTools() {
  return (
    <div className="flex h-[32px] items-start pt-[9px]">
      <DrawBtn>{DRAW_ICONS[0]}</DrawBtn>
      <div className="ml-[4px] flex gap-[2px]">
        {DRAW_ICONS.slice(1).map((icon, i) => (
          <DrawBtn key={i}>{icon}</DrawBtn>
        ))}
      </div>
      <div className="ml-[4px] flex gap-[2px]">
        {DIM_ICONS.map((icon, i) => (
          <DrawBtn key={i}>{icon}</DrawBtn>
        ))}
        {LAST_ICONS.map((icon, i) => (
          <DrawBtn key={i}>{icon}</DrawBtn>
        ))}
      </div>
    </div>
  );
}

const CalBtn = () => (
  <span className={`${btn} h-[20px] w-[19px]`}>
    <svg width="13" height="12" viewBox="0 0 13 12">
      <rect width="13" height="12" fill="#fff" />
      <rect width="13" height="3" fill="#aaa" />
      <path d="M2 5H11M2 7H11M2 9H11" stroke="#333" strokeDasharray="1 1" />
    </svg>
  </span>
);

function RangeBar() {
  const field = 'flex h-[20px] items-center justify-center border border-[#3f3f3f]';
  return (
    <div className="-ml-[1px] flex h-[22px] items-center text-[14px] text-[#e6e6e6] tracking-[-0.3px]">
      <span className="w-[35px] text-[12px]">本数:</span>
      <span className="flex h-[20px] w-[22px] items-center justify-center bg-[#474747] text-[11px] tracking-[-1px]">100</span>
      <span className={`${btn} h-[20px] w-[16px]`}><CaretDown /></span>
      <span className={`${btn} h-[20px] w-[16px]`}><CaretDown className="rotate-180 text-white" /></span>
      <span className="ml-[5px] w-[24px] text-[12px]">本</span>
      <span className={`${field} w-[77px] bg-[#474747]`}>2018/07/16</span>
      <CalBtn />
      <span className={`${field} ml-[10px] w-[41px] bg-[#4c4c4c] text-[12px] text-[#6a6a6a]`}>00:00</span>
      <span className="ml-[10px] w-[19px] text-[12px]">～</span>
      <span className={`${field} w-[77px] bg-[#474747]`}>2018/11/16</span>
      <CalBtn />
      <span className={`${field} ml-[10px] w-[41px] bg-[#4c4c4c] text-[12px] text-[#6a6a6a]`}>00:00</span>
      <span className={`${btn} ml-[10px] h-[22px] w-[25px]`}>
        <svg width="15" height="12" viewBox="0 0 15 12"><path d="M3 2H12V8H4M6 5L3 8L6 11" stroke="#fff" strokeWidth="1.8" fill="none" /></svg>
      </span>
    </div>
  );
}

function NewsBar() {
  return (
    <div className="relative flex h-[50px] shrink-0 items-start border-b-[10px] border-b-[#2c2c2c] bg-[#333333] px-[4px]">
      <div className="flex h-[40px] w-full items-center border border-[#222] pl-[15px] text-[13px] text-[#f2f2f2] tracking-[-0.15px]">
        【楽天FX】はじめての取引で最大200,000円キャッシュバックキャンペーン！
        <span className="ml-[3px] mr-[2px] h-[7px] w-[8px] border border-white" />
        <span className="underline tracking-[0.5px]">詳細はこちら</span>
      </div>
      <span className="absolute right-[6px] top-[2px] text-[13px] leading-none text-white">✕</span>
    </div>
  );
}

// ---------- taskbar ----------
const TaskSlot = ({ children, state }: { children: ReactNode; state?: 'open' | 'active' }) => (
  <div
    className={`flex h-[40px] w-[49px] shrink-0 items-center justify-center ${
      state === 'active' ? 'border-b-[2px] border-b-[#66a8e0] bg-[#4a4a40]' : state === 'open' ? 'border-b-[2px] border-b-[#66a8e0]' : ''
    }`}
  >
    {children}
  </div>
);

const RedApp = () => (
  <span className="flex size-[24px] items-center justify-center rounded-[3px] bg-[#9a1212]">
    <svg width="18" height="16" viewBox="0 0 18 16"><path d="M3 7V13M7 6V14M11 4V11M15 1V9" stroke="#fff" strokeWidth="2" /></svg>
  </span>
);

function Taskbar() {
  return (
    <div className="flex h-[40px] shrink-0 items-center bg-gradient-to-r from-[#0c0c0e] via-[#16130f] to-[#151818] text-white">
      <div className="flex w-[48px] items-center justify-center">
        <svg width="17" height="17" viewBox="0 0 17 17"><path d="M0 2.5L7 1.5V8H0ZM8 1.3L17 0V8H8ZM0 9H7V15.5L0 14.5ZM8 9H17V17L8 15.7Z" fill="#fff" /></svg>
      </div>
      <div className="flex h-[40px] w-[344px] items-center bg-[#f0f0f0] text-[14px] text-[#333]">
        <span className="ml-[10px] size-[20px] rounded-full border-[3px] border-[#111]" />
        <span className="ml-[10px] flex-1">ここに入力して検索</span>
        <svg className="mr-[13px]" width="13" height="20" viewBox="0 0 13 20"><rect x="3.5" y="1" width="6" height="12" rx="3" fill="none" stroke="#444" /><path d="M1 9C1 17 12 17 12 9M6.5 15V19M3 19H10" stroke="#444" fill="none" /></svg>
      </div>
      <div className="flex w-[49px] items-center justify-center">
        <svg width="16" height="18" viewBox="0 0 16 18"><path d="M1 3H15M1 15H15" stroke="#fff" strokeWidth="1.5" /><rect x="1.5" y="5.5" width="10" height="7" fill="none" stroke="#fff" /><rect x="13" y="6" width="3" height="3" fill="#fff" /></svg>
      </div>
      <TaskSlot>
        <span className="relative flex size-[26px] items-center justify-center">
          <span className="text-[30px] font-bold leading-none text-[#1a9ae0] font-['Liberation_Sans',sans-serif] -mt-[6px]">e</span>
          <svg className="absolute inset-0" width="26" height="26" viewBox="0 0 26 26"><ellipse cx="13" cy="13" rx="13" ry="5" transform="rotate(-40 13 13)" fill="none" stroke="#f0c020" strokeWidth="1.4" /></svg>
        </span>
      </TaskSlot>
      <TaskSlot>
        <svg width="22" height="20" viewBox="0 0 22 20"><path d="M0 1H8L10 3H22V6H0Z" fill="#f6d265" /><rect y="5" width="22" height="15" fill="#fbe08a" /><rect x="6" y="13" width="10" height="7" fill="#1a86d8" /><rect x="9" y="11" width="4" height="3" fill="#1a86d8" /></svg>
      </TaskSlot>
      <TaskSlot>
        <span className="flex size-[23px] items-center justify-center rounded-[4px] bg-[#3a44c0]">
          <svg width="17" height="15" viewBox="0 0 17 15"><path d="M1 1H4V4H1ZM6 1H9V4H6ZM11 1H14V4H11ZM1 6H4V9H1ZM6 6H9V9H6ZM1 11H4V14H1ZM6 11H9V14H6Z" fill="#fff" /><circle cx="13" cy="10" r="3" fill="none" stroke="#fff" strokeWidth="1.5" /></svg>
        </span>
      </TaskSlot>
      <TaskSlot state="open">
        <span className="flex size-[24px] items-center justify-center border-[2px] border-[#cce4f6] bg-[#3a9cd4] gap-[1px] p-[1px]">
          <span className="h-full w-1/2 bg-[#1a6fa8]" />
          <span className="h-full w-1/2 bg-[#9adfe8]" />
        </span>
      </TaskSlot>
      <TaskSlot state="open">
        <span className="flex h-[24px] w-[22px] items-center">
          <span className="z-10 flex h-[22px] w-[14px] items-center justify-center bg-[#2a5699] text-[11px] font-bold font-['Liberation_Sans',sans-serif]">W</span>
          <span className="-ml-[1px] h-[18px] w-[9px] bg-[repeating-linear-gradient(#fff_0px,#fff_2px,#2a5699_2px,#2a5699_3px)]" />
        </span>
      </TaskSlot>
      <TaskSlot>
        <svg width="24" height="24" viewBox="0 0 24 24">
          <circle cx="12" cy="12" r="11" fill="#dd4b3e" />
          <path d="M12 12L2.5 6.5A11 11 0 0 0 12 23Z" fill="#3aa655" />
          <path d="M12 12L21.5 6.5A11 11 0 0 1 12 23Z" fill="#f0c22e" />
          <circle cx="12" cy="12" r="5.5" fill="#fff" />
          <circle cx="12" cy="12" r="4.2" fill="#4a88ea" />
        </svg>
      </TaskSlot>
      <TaskSlot>
        <svg width="26" height="28" viewBox="0 0 26 28">
          <ellipse cx="11" cy="16" rx="10" ry="9" fill="#a8d4ea" />
          <circle cx="6" cy="16" r="1.6" fill="#d04a3a" />
          <circle cx="9" cy="11" r="1.6" fill="#e8c030" />
          <circle cx="14" cy="11" r="1.6" fill="#50a040" />
          <path d="M13 26L22 5" stroke="#d8962e" strokeWidth="2" />
          <path d="M20 6L23 1L25 4Z" fill="#eeeeee" />
        </svg>
      </TaskSlot>
      <TaskSlot>
        <span className="text-[34px] font-bold leading-none text-[#0078d7] font-['Liberation_Sans',sans-serif] -mt-[8px]">e</span>
      </TaskSlot>
      <TaskSlot>
        <svg width="20" height="28" viewBox="0 0 20 28">
          <path d="M2 24C0 12 8 2 17 1C20 8 19 20 14 27L11 12L7 27Z" fill="#2f5ea8" />
        </svg>
      </TaskSlot>
      <TaskSlot>
        <span className="flex h-[29px] w-[24px] flex-col items-center rounded-[2px] bg-white pt-[1px]">
          <span className="text-[16px] font-bold leading-[20px] text-[#f08a1c] font-['Liberation_Sans',sans-serif]">Q</span>
          <span className="text-[5px] leading-[6px] text-[#222]">チャート</span>
        </span>
      </TaskSlot>
      <TaskSlot><RedApp /></TaskSlot>
      <TaskSlot>
        <span className="flex h-[24px] w-[24px] items-center">
          <span className="z-10 flex h-[24px] w-[14px] items-center justify-center bg-[#0f6cbd] text-[12px] font-bold font-['Liberation_Sans',sans-serif]">O</span>
          <svg width="10" height="14" viewBox="0 0 10 14"><rect width="10" height="14" fill="#fff" /><path d="M1 3L4 8L9 2" stroke="#0f6cbd" strokeWidth="1.5" fill="none" /></svg>
        </span>
      </TaskSlot>
      <TaskSlot state="active"><RedApp /></TaskSlot>

      <div className="ml-auto flex h-full items-center">
        <svg className="mr-[20px]" width="16" height="16" viewBox="0 0 16 16"><circle cx="5" cy="9" r="2.6" fill="none" stroke="#e6e6e6" /><circle cx="11" cy="4" r="2.6" fill="none" stroke="#e6e6e6" /><path d="M1 15C1 12 3 11.5 5 11.5S9 12 9 15M9 9C11 7 15 8 15 12" fill="none" stroke="#e6e6e6" /></svg>
        <svg className="mr-[12px]" width="12" height="7" viewBox="0 0 12 7"><path d="M0.5 6.5L6 1L11.5 6.5" fill="none" stroke="#e6e6e6" /></svg>
        <svg className="mr-[9px]" width="13" height="13" viewBox="0 0 13 13"><path d="M1 12C1 6 6 1 12 1M4 12C4 8 8 4 12 4M7 12C7 10 10 7 12 7" fill="none" stroke="#bbb" /><rect x="10" y="10" width="3" height="3" fill="#eee" /></svg>
        <svg className="mr-[10px]" width="16" height="14" viewBox="0 0 16 14"><path d="M1 5H4L8 1V13L4 9H1Z" fill="none" stroke="#e6e6e6" /><path d="M10 4Q12 7 10 10M12 2Q15 7 12 12" fill="none" stroke="#888" /></svg>
        <span className="mr-[16px] text-[18px] leading-none text-[#dddddd]">A</span>
        <span className="mr-[12px] flex size-[15px] items-center justify-center border border-white bg-black text-[10px] font-bold leading-none">J</span>
        <div className="flex w-[66px] flex-col items-center text-[12px] leading-[18px] text-[#e0e0e0] tracking-[-0.3px]">
          <span>7:03</span>
          <span>2018/11/17</span>
        </div>
        <div className="relative ml-[14px] mr-[25px] w-[16px] h-[20px]">
          <span className="absolute left-0 top-[1px] h-[12px] w-[16px] bg-white" />
          <span className="absolute -right-[8px] top-[6px] flex size-[15px] items-center justify-center rounded-full border border-[#888] bg-[#333] text-[10px] leading-none">7</span>
        </div>
      </div>
    </div>
  );
}

export default function App() {
  return (
    <div className="flex h-[1080px] w-[1920px] flex-col overflow-hidden bg-[#333333] font-['Noto_Sans_CJK_JP','Noto_Sans',sans-serif] [font-feature-settings:'palt'] text-white">
      <TitleBar />
      <MenuBar />
      <ToolRows />
      <section className="mx-[4px] mt-[2px] flex flex-1 flex-col overflow-hidden border-t border-[#1c1c1c] bg-[#3c3c3c]">
        <TabStrip />
        <div className="mx-[5px] flex flex-1 flex-col bg-[#565656] px-[11px]">
          <ChartControls />
          <DrawingTools />
          <div className="relative mt-[4px] h-[763px] w-[1880px]">
            <ChartSvg />
            <DataPanel />
          </div>
          <RangeBar />
        </div>
        <div className="h-[8px] shrink-0 bg-[repeating-linear-gradient(135deg,#3a3a3a_0px,#3a3a3a_1px,#464646_1px,#464646_2px)]" />
      </section>
      <NewsBar />
      <Taskbar />
    </div>
  );
}
